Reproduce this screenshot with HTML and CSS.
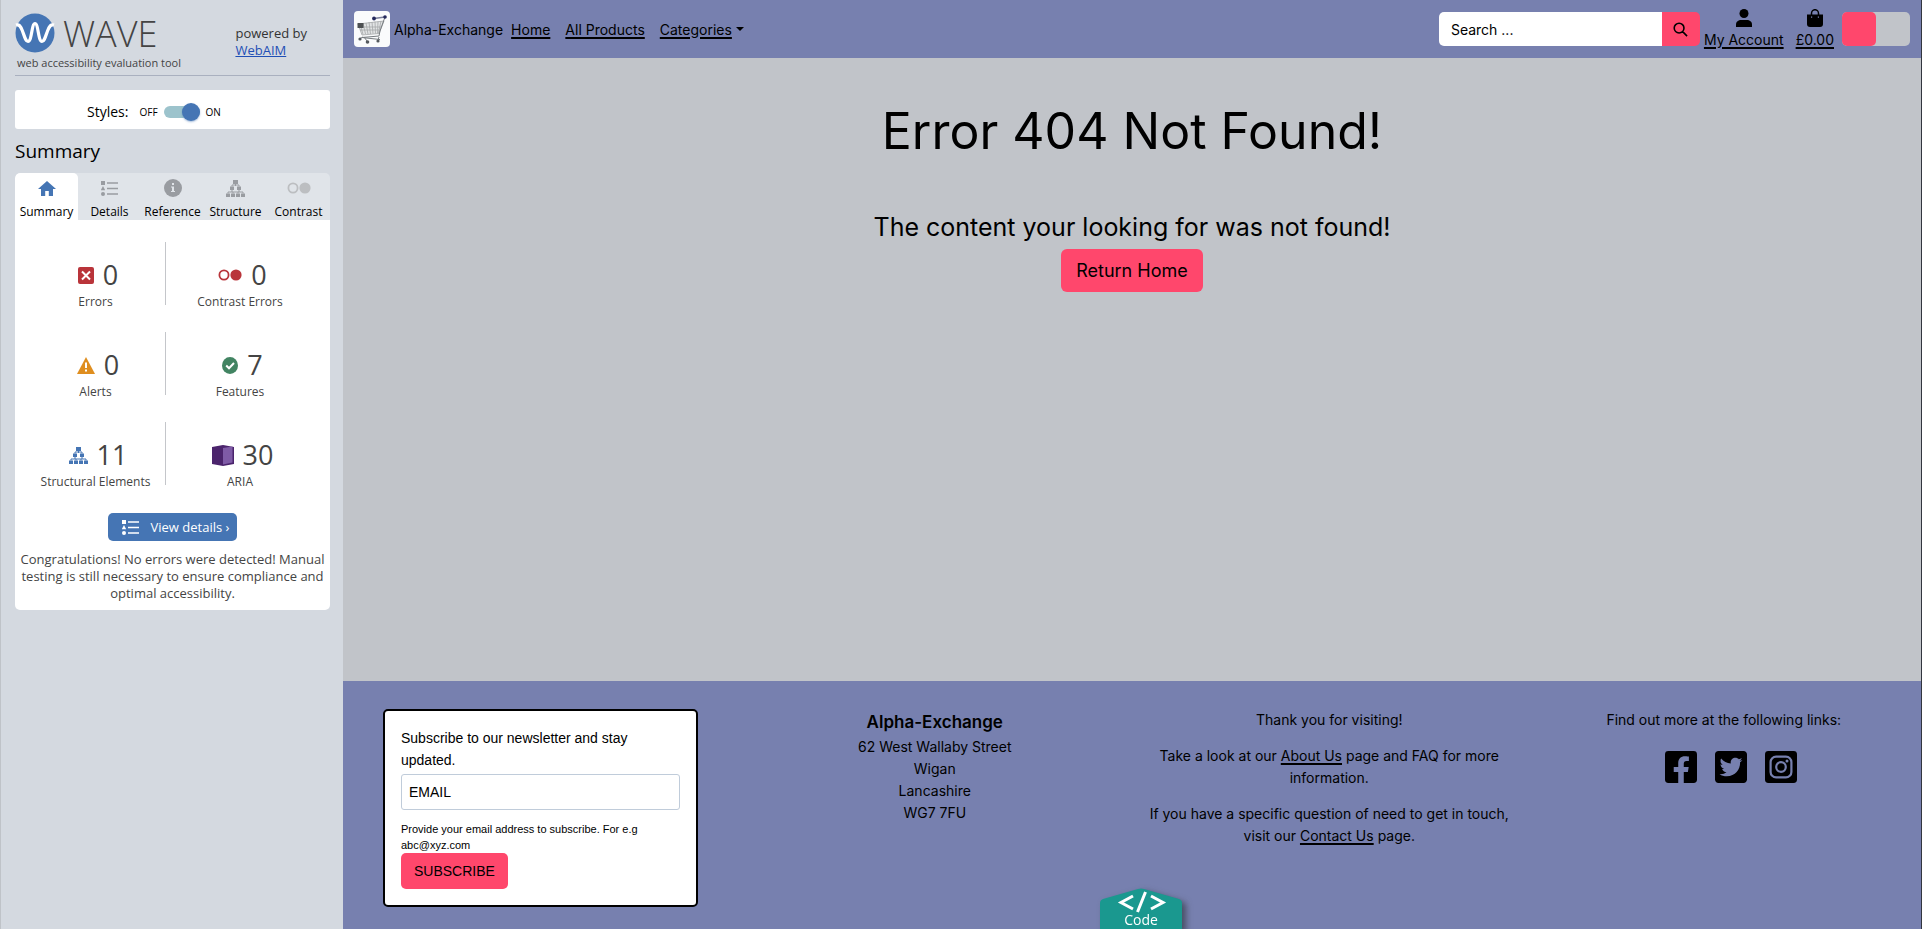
FILE: index.html
```html
<!DOCTYPE html>
<html lang="en">
<head>
<meta charset="utf-8">
<meta name="viewport" content="width=device-width, initial-scale=1">
<title>Alpha-Exchange</title>
<link rel="stylesheet" href="styles.css">
</head>
<body>
<svg class="sprite" aria-hidden="true">
  <symbol id="tree" viewBox="0 0 19 17">
    <path d="M7 0h5v4H7zM4 6.500h4v3.500H4zM11 6.500h4v3.500h-4zM0 13.500h4V17H0zM5 13.500h4V17H5zM10 13.500h4V17h-4zM15 13.500h4V17h-4z"/>
    <path d="M9.500 4v2M6 6.500V5h7v1.500M6 10v2M13 10v2M2 13.500V12h5v1.500M12 13.500V12h5v1.500M7 12h5" fill="none" stroke="currentColor"/>
  </symbol>
  <symbol id="list" viewBox="0 0 17 15">
    <path d="M0 0h4v4H0zM2 5l2.200 4.200H-.2zM6 1.200h11v1.600H6zM6 6.700h11v1.600H6zM6 12.200h11v1.600H6z"/>
    <circle cx="2" cy="13" r="2"/>
  </symbol>
  <symbol id="rings" viewBox="0 0 24 12">
    <circle cx="6" cy="6" r="4.600" fill="none" stroke="currentColor" stroke-width="1.800"/>
    <circle cx="18" cy="6" r="5.600"/>
  </symbol>
</svg>

<aside class="wave">
  <header class="wave-head">
    <div>
      <div class="wave-logo">
        <svg width="40" height="40" viewBox="0 0 40 40" aria-hidden="true"><circle cx="20" cy="20" r="19.500" fill="#4575b4"/><path d="M1 12C4 11 5.500 13 7.500 18c2.500 7 3.500 10.500 5.500 10.500 4 0 3.500-18 7-18s3 18 7 18c2 0 3-3.500 5.500-10.500 2-5 3.500-7 6.500-6" fill="none" stroke="#fff" stroke-width="3.200"/></svg>
        <span>WAVE</span>
      </div>
      <p class="tagline">web accessibility evaluation tool</p>
    </div>
    <p class="powered">powered by<br><a href="#">WebAIM</a></p>
  </header>

  <div class="styles-box">
    <label for="styles">Styles:</label>
    <small>OFF</small><input class="switch" id="styles" type="checkbox" checked><small>ON</small>
  </div>

  <h2 class="wave-title">Summary</h2>
  <nav class="tabs">
    <button class="tab active"><svg width="18" height="15" viewBox="0 0 18 15"><path d="M9 0l9 8h-3v7h-4.200v-5H7.200v5H3V8H0z"/></svg>Summary</button>
    <button class="tab"><svg width="17" height="15"><use href="#list"/></svg>Details</button>
    <button class="tab"><svg width="18" height="18" viewBox="0 0 18 18"><circle cx="9" cy="9" r="9"/><path d="M8 4h2v2H8zM7 7.500h3V12h1v1H7v-1h1V8.500H7z" fill="#e0e4e9"/></svg>Reference</button>
    <button class="tab"><svg width="19" height="17"><use href="#tree"/></svg>Structure</button>
    <button class="tab"><svg class="pale" width="24" height="12"><use href="#rings"/></svg>Contrast</button>
  </nav>
  <section class="panel">
    <div class="counts">
      <div class="count"><div><svg width="16" height="17" viewBox="0 0 16 17"><rect width="16" height="17" rx="2" fill="#b9343a"/><path d="M4 4.500l8 8m0-8l-8 8" stroke="#fff" stroke-width="2"/></svg><b>0</b></div>Errors</div>
      <div class="count"><div><svg class="red" width="24" height="12"><use href="#rings"/></svg><b>0</b></div>Contrast Errors</div>
      <div class="count"><div><svg width="18" height="17" viewBox="0 0 18 17"><path d="M9 0l9 17H0z" fill="#df8e1f"/><path d="M9 5.500v5.500M9 12.500v2" stroke="#fff" stroke-width="2"/></svg><b>0</b></div>Alerts</div>
      <div class="count"><div><svg width="16" height="17" viewBox="0 0 16 17"><ellipse cx="8" cy="8.500" rx="8" ry="8.500" fill="#428462"/><path d="M4.200 8.500l2.800 2.800 5-5.300" fill="none" stroke="#fff" stroke-width="2"/></svg><b>7</b></div>Features</div>
      <div class="count"><div><svg class="blue" width="19" height="17"><use href="#tree"/></svg><b>11</b></div>Structural Elements</div>
      <div class="count"><div><svg width="22" height="21" viewBox="0 0 22 21"><path d="M0 2L11 0l11 2v17l-11 2-11-2z" fill="#4b246c"/><path d="M11 3l9.500-1.500v16L11 19.500z" fill="#7f5ba6"/></svg><b>30</b></div>ARIA</div>
    </div>
    <button class="details"><svg width="17" height="15"><use href="#list"/></svg>View details ›</button>
    <p class="congrats">Congratulations! No errors were detected! Manual testing is still necessary to ensure compliance and optimal accessibility.</p>
  </section>
</aside>

<div class="site">
  <header class="navbar">
    <a class="brand" href="#">
      <svg width="36" height="36" viewBox="0 0 36 36" aria-hidden="true"><rect width="36" height="36" rx="4" fill="#fafbfc"/><path d="M4 13l26-3-5 12.500L8 24z" fill="#e2e4e5"/><path d="M4 13l26-3-5 12.500L8 24zM6 12.500l3 11M9 12l2.500 11M12 12l2 11M15 11l1.500 12M18 11l1 11.500M21 10.500l.5 12M24 10.500l-.5 12M27 10l-2.500 12M5 16h22M6 19h20" fill="none" stroke="#a4a7a8" stroke-width=".8"/><path d="M31 6l-5 14-1 5-17 1.500 18 2M9 26l-4 2M10 26l3 4M25 26l-1 3" fill="none" stroke="#777c80"/><path d="M20 7.500L31 6" stroke="#777c99" stroke-width="1.500"/><path d="M3.500 12h6v5h-6z" fill="#4d5052"/><g fill="#24295c"><circle cx="20" cy="7.500" r="1.900"/><circle cx="31" cy="6" r="1.800"/></g><g fill="#54595e"><circle cx="6" cy="28" r="1.600"/><circle cx="13.500" cy="31" r="1.800"/><circle cx="24" cy="30" r="1.600"/></g></svg>
      Alpha-Exchange</a>
    <nav class="links">
      <a href="#">Home</a>
      <a href="#">All Products</a>
      <a class="dropdown" href="#"><span>Categories</span></a>
    </nav>
    <form class="search">
      <input type="text" placeholder="Search ..." aria-label="Search">
      <button type="button" aria-label="Search"><svg width="15" height="15" viewBox="0 0 16 16"><path d="M10.300 10.300l4.700 4.700M1.300 6.500a5.200 5.200 0 1 0 10.400 0a5.200 5.200 0 1 0-10.400 0z" fill="none" stroke="#000" stroke-width="1.700"/></svg></button>
    </form>
    <a class="tool" href="#"><svg width="16" height="18" viewBox="0 0 16 18"><circle cx="8" cy="4.500" r="4.500"/><path d="M0 18v-2.500C0 12.500 2.500 11 5 11h6c2.500 0 5 1.500 5 4.500V18z"/></svg>My Account</a>
    <a class="tool bag" href="#"><svg width="16" height="18" viewBox="0 0 16 18"><path d="M4.500 7V4.200a3.500 3.500 0 0 1 7 0V7" fill="none" stroke="#000" stroke-width="1.500"/><path d="M0 5.500h16V15a3 3 0 0 1-3 3H3a3 3 0 0 1-3-3z"/><path d="M4 7.500h1.200v1.200H4zM10.800 7.500H12v1.200h-1.200z" fill="#7780af"/></svg>£0.00</a>
    <input class="theme" type="checkbox" aria-label="Change theme">
  </header>

  <main class="main">
    <h1>Error 404 Not Found!</h1>
    <p>The content your looking for was not found!</p>
    <button class="home">Return Home</button>
  </main>

  <footer class="footer">
    <div>
      <form class="newsletter">
        <label for="email">Subscribe to our newsletter and stay updated.</label>
        <input id="email" type="email" placeholder="EMAIL">
        <p>Provide your email address to subscribe. For e.g abc@xyz.com</p>
        <button type="button">SUBSCRIBE</button>
      </form>
    </div>
    <address>
      <strong>Alpha-Exchange</strong>
      62 West Wallaby Street<br>Wigan<br>Lancashire<br>WG7 7FU
    </address>
    <div class="about">
      <p>Thank you for visiting!</p>
      <p>Take a look at our <a href="#">About Us</a> page and FAQ for more information.</p>
      <p>If you have a specific question of need to get in touch, visit our <a href="#">Contact Us</a> page.</p>
    </div>
    <div class="about">
      <p>Find out more at the following links:</p>
      <div class="social">
        <a href="#" aria-label="Facebook"><svg width="32" height="32" viewBox="0 32 448 448"><path d="M400 32H48A48 48 0 0 0 0 80v352a48 48 0 0 0 48 48h137.250V327.690h-63V256h63v-54.640c0-62.150 37-96.480 93.670-96.480 27.140 0 55.520 4.840 55.520 4.840v61h-31.270c-30.810 0-40.420 19.120-40.420 38.730V256h68.780l-11 71.690h-57.780V480H400a48 48 0 0 0 48-48V80a48 48 0 0 0-48-48z"/></svg></a>
        <a href="#" aria-label="Twitter"><svg width="32" height="32" viewBox="0 32 448 448"><path d="M400 32H48C21.500 32 0 53.500 0 80v352c0 26.500 21.500 48 48 48h352c26.500 0 48-21.500 48-48V80c0-26.500-21.500-48-48-48zm-48.900 158.800c.2 2.800.2 5.700.2 8.500 0 86.700-66 186.600-186.600 186.600-37.200 0-71.700-10.800-100.700-29.400 5.300.6 10.400.8 15.800.8 30.700 0 58.900-10.400 81.400-28-28.800-.6-53-19.500-61.300-45.500 10.100 1.500 19.200 1.500 29.600-1.200-30-6.100-52.500-32.500-52.500-64.400v-.8c8.700 4.900 18.900 7.900 29.600 8.300a65.447 65.447 0 0 1-29.200-54.600c0-12.200 3.200-23.400 8.900-33.100 32.300 39.800 80.800 65.800 135.200 68.600-9.300-44.500 24-80.600 64-80.600 18.900 0 35.900 7.900 47.900 20.700 14.800-2.800 29-8.300 41.600-15.800-4.900 15.200-15.200 28-28.800 36.100 13.200-1.400 26-5.100 37.800-10.200-8.900 13.100-20.100 24.700-32.900 34z"/></svg></a>
        <a href="#" aria-label="Instagram"><svg width="32" height="32" viewBox="0 0 32 32"><rect width="32" height="32" rx="3.400"/><g fill="none" stroke="#7780af" stroke-width="2.200"><rect x="5.600" y="5.600" width="20.800" height="20.800" rx="5.500"/><circle cx="16" cy="16" r="4.800"/></g><circle cx="22" cy="10" r="1.500" fill="#7780af"/></svg></a>
      </div>
    </div>
  </footer>
</div>

<button class="code">
  <svg class="code-shape" viewBox="0 0 82 42" aria-hidden="true"><path d="M0 42V15q0-3 3-4L38 1q3-1 6 0l35 10q3 1 3 4v27z" fill="#1a988f"/><path d="M33 8L21 14.500 33 21M51 8l12 6.500L51 21M45.500 4l-8 20" fill="none" stroke="#fff" stroke-width="3"/></svg>
  <span>Code</span>
</button>
</body>
</html>
```
FILE: styles.css
```css
* { box-sizing: border-box; }

body {
  margin: 0;
  min-height: 100vh;
  display: flex;
  border-left: 1px solid #bfc3c8;
  border-right: 1px solid #33363f;
  font-family: "Open Sans", sans-serif;
  color: #000;
}

p, h1, h2 { margin: 0; font-weight: inherit; }
button, input { font: inherit; color: inherit; }
button { border: 0; padding: 0; cursor: pointer; }
.sprite { position: absolute; width: 0; height: 0; }
svg { flex: none; fill: currentColor; }

/* Evaluation sidebar */
.wave {
  flex: 0 0 342px;
  padding: 12px 13px 0 14px;
  background: #d4d9e0;
}

.wave-head {
  display: flex;
  justify-content: space-between;
  height: 64px;
  padding-right: 23px;
  border-bottom: 1px solid #a9b0bf;
}

.wave-logo {
  display: flex;
  align-items: center;
  gap: 8px;
  height: 42px;
  font-size: 36px;
  font-weight: 300;
  color: #444;
}

.tagline {
  padding-left: 2px;
  font-size: 11px;
  line-height: 18px;
  color: #444;
}

.powered {
  padding-top: 13px;
  font-size: 13px;
  line-height: 17px;
  color: #333;
}

.powered a { color: #1f4fb5; }

.styles-box {
  display: flex;
  align-items: center;
  height: 39px;
  margin-top: 14px;
  padding: 4px 0 0 72px;
  border-radius: 3px;
  background: #fff;
  font-size: 14px;
}

.styles-box label { margin-right: 11px; }
.styles-box small { font-size: 10px; }

.switch {
  appearance: none;
  display: flex;
  align-items: center;
  justify-content: flex-end;
  width: 36px;
  height: 12px;
  margin: 0 6px;
  border-radius: 6px;
  background: #9cc3cc;
}

.switch::before {
  content: "";
  width: 18px;
  height: 18px;
  border-radius: 50%;
  background: #4575b4;
  box-shadow: 0 1px 2px #4575b480;
}

.wave-title {
  margin: 9px 0;
  font-size: 19px;
  line-height: 26px;
}

.tabs {
  display: grid;
  grid-template-columns: repeat(5, 1fr);
  border-radius: 5px 5px 0 0;
  background: #e0e4e9;
  overflow: hidden;
}

.tab {
  display: grid;
  grid-template-rows: 30px 17px;
  place-items: center;
  border-radius: 5px 5px 0 0;
  background: none;
  font-size: 12px;
  line-height: 16px;
}

.tab svg { color: #999ca1; }
.tab .pale { color: #bcbec1; }
.tab.active { background: #fff; }
.tab.active svg { color: #4575b4; }

.panel {
  display: flex;
  flex-direction: column;
  align-items: center;
  padding: 22px 0 8px;
  border-radius: 0 0 5px 5px;
  background: #fff;
  color: #444;
}

.counts {
  align-self: stretch;
  display: grid;
  grid-template-columns: 35fr 37fr;
  row-gap: 27px;
  padding: 0 16px 0 11px;
}

.count {
  height: 63px;
  padding-top: 15px;
  text-align: center;
  font-size: 12px;
  line-height: 18px;
}

.count:nth-child(odd) { border-right: 1px solid #c4c6ca; }

.count div {
  display: flex;
  align-items: center;
  justify-content: center;
  gap: 9px;
  height: 36px;
  padding-left: 5px;
}

.count b { font-size: 27px; font-weight: 400; }
.red { color: #b9343a; }
.blue { color: #4575b4; }

.details {
  display: flex;
  align-items: center;
  gap: 12px;
  height: 28px;
  margin: 28px 0 10px;
  padding: 0 8px 0 14px;
  border-radius: 5px;
  background: #4575b4;
  color: #fff;
  font-size: 13px;
}

.congrats {
  padding: 0 3px;
  text-align: center;
  font-size: 13px;
  line-height: 17px;
}

/* Store */
.site {
  flex: 1;
  display: flex;
  flex-direction: column;
  background: #c1c4c9;
  font-family: Inter, sans-serif;
  font-size: 14px;
}

.site a {
  color: #000;
  text-decoration-thickness: 2px;
  text-underline-offset: 2px;
}

.navbar {
  display: flex;
  align-items: center;
  height: 58px;
  padding: 0 11px;
  background: #7780af;
}

.navbar .brand {
  display: flex;
  align-items: center;
  gap: 4px;
  margin-right: 8px;
  text-decoration: none;
}

.links { display: flex; gap: 15px; }
.links .dropdown { display: flex; align-items: center; gap: 4px; text-decoration: none; }
.dropdown span { text-decoration: underline 2px; text-underline-offset: 2px; }

.dropdown::after {
  content: "";
  border: 4px solid transparent;
  border-top-color: #000;
  border-bottom: 0;
}

.search {
  display: flex;
  width: 261px;
  height: 34px;
  margin: 0 4px 0 auto;
  border-radius: 5px;
  overflow: hidden;
}

.search input {
  flex: 1;
  min-width: 0;
  border: 0;
  padding: 0 12px;
  background: #fff;
}

.search button {
  width: 38px;
  background: #ff476c;
  display: grid;
  place-items: center;
}

::placeholder { color: #000; opacity: 1; }

.tool {
  display: flex;
  flex-direction: column;
  align-items: center;
  gap: 4px;
  line-height: 18px;
  margin-bottom: 1px;
}

.bag { margin: 0 8px 1px 12px; }

.theme {
  appearance: none;
  width: 68px;
  height: 34px;
  margin: 0;
  border-radius: 5px;
  background: #c1c4c9;
}

.theme::before {
  content: "";
  display: block;
  width: 34px;
  height: 34px;
  border-radius: 5px;
  background: #ff476c;
}

.main {
  flex: 1;
  display: flex;
  flex-direction: column;
  align-items: center;
  padding-top: 41px;
  text-align: center;
}

.main h1 { font-size: 50px; line-height: 64px; }
.main p { margin-top: 49px; font-size: 25px; line-height: 30px; }

.home {
  height: 43px;
  margin-top: 7px;
  padding: 0 15px;
  border-radius: 6px;
  background: #ff476c;
  font-size: 18px;
}

.footer {
  display: grid;
  grid-template-columns: repeat(4, 1fr);
  padding: 28px 0 22px;
  background: #7780af;
  line-height: 22px;
}

.footer address { font-style: normal; text-align: center; }
.footer strong { display: block; font-size: 17px; font-weight: 600; line-height: 27px; }

.newsletter {
  margin: 0 40px;
  padding: 16px;
  border: 2px solid #000;
  border-radius: 5px;
  background: #fff;
  font-family: "Liberation Sans", Arial, sans-serif;
}

.newsletter label { display: block; }

.newsletter input {
  display: block;
  width: 100%;
  height: 36px;
  margin: 3px 0 11px;
  padding: 0 7px;
  border: 1px solid #c0ccda;
  border-radius: 3px;
}

.newsletter p { font-size: 11px; line-height: 16px; }

.newsletter button {
  display: block;
  height: 36px;
  padding: 0 13px;
  border-radius: 5px;
  background: #ff476c;
}

.about { text-align: center; }
.about p { padding: 0 12px; margin-bottom: 14px; }
.social { display: flex; justify-content: center; gap: 18px; padding-left: 14px; margin-top: 20px; }
.social svg { display: block; }

/* Source badge pinned over the page's bottom edge */
.code {
  position: fixed;
  bottom: 0;
  left: 1100px;
  width: 82px;
  height: 41px;
  padding-top: 22px;
  background: none;
  color: #fff;
  font-size: 14px;
  line-height: 20px;
}

.code-shape {
  position: absolute;
  inset: 0;
  width: 82px;
  height: 42px;
  filter: drop-shadow(4px 3px 3px #2228);
}

.code span { position: relative; }
```
